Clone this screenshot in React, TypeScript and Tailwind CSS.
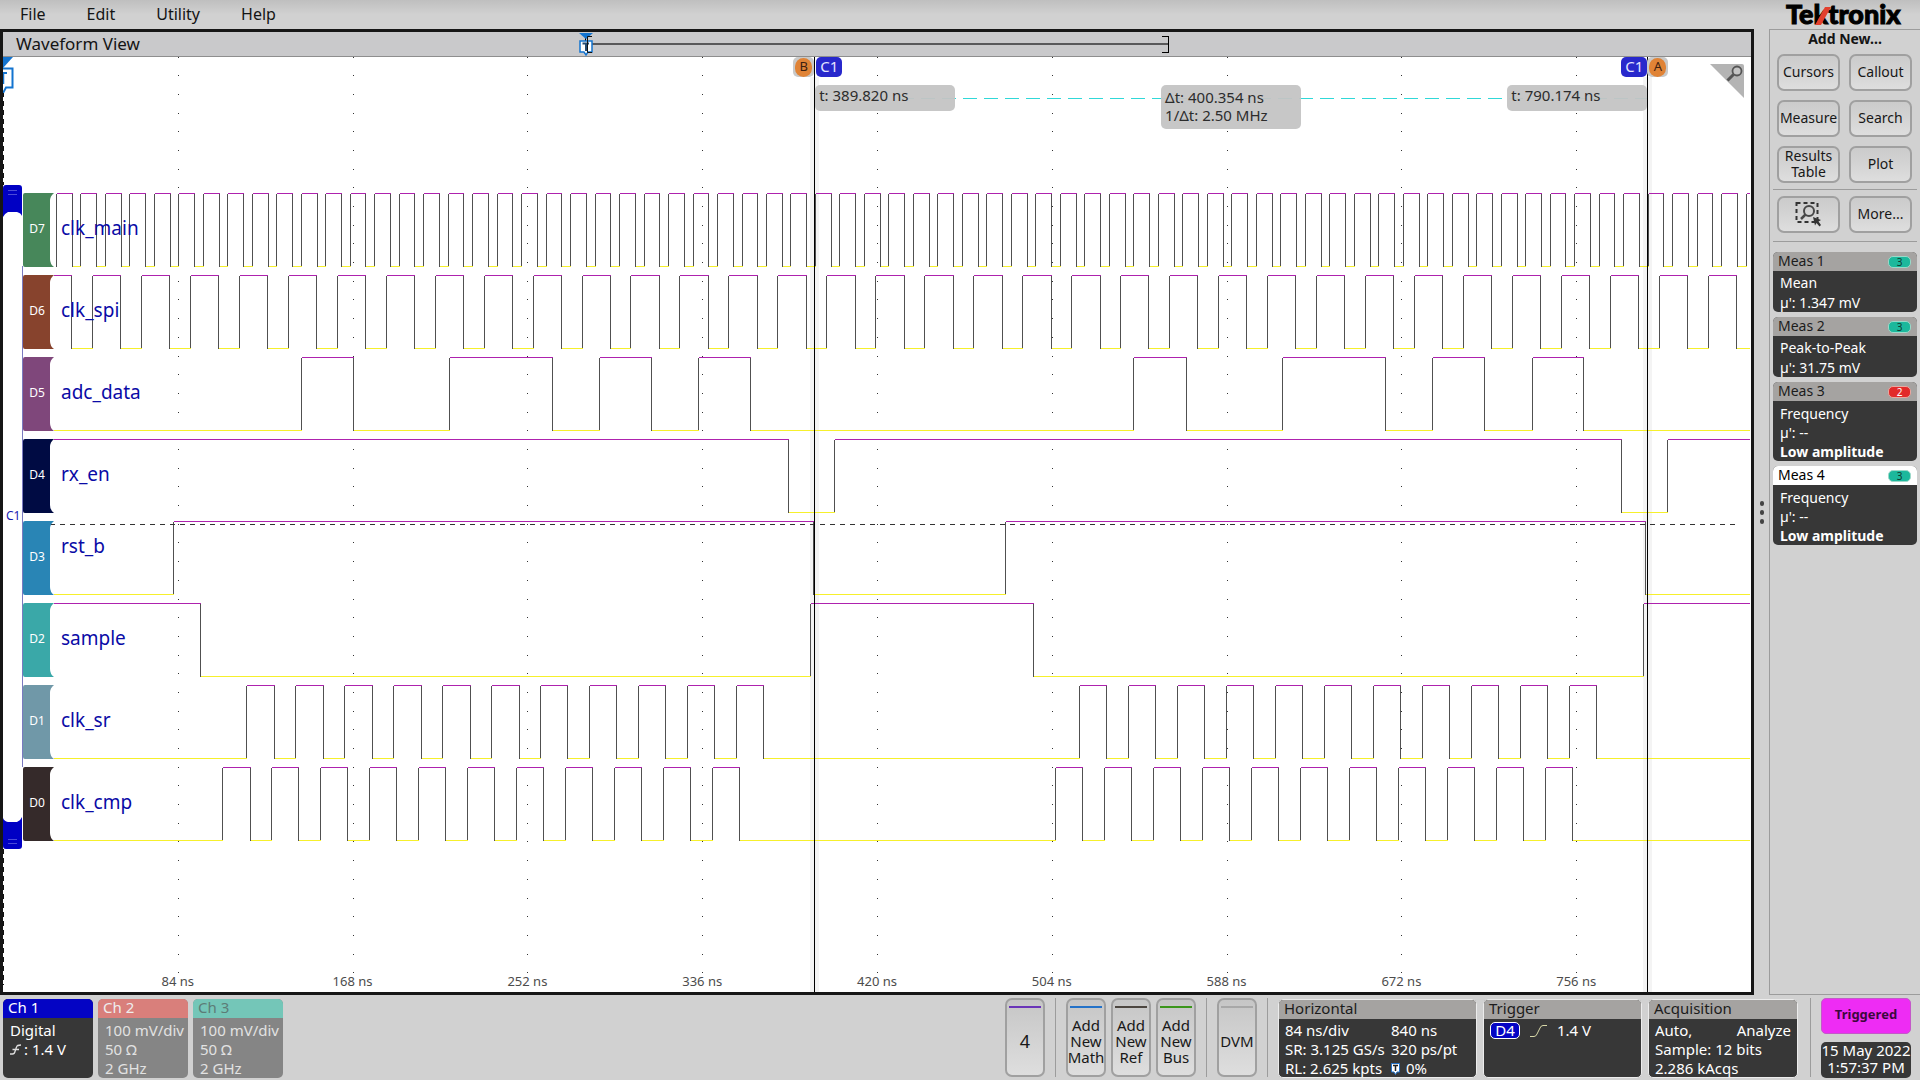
import React from "react";

const VIEW_W = 1748;
const VIEW_H = 935;
const SPAN_NS = 840;
const ROW_PITCH = 82;
const FIRST_HIGH = 136;
const SWING = 73;

const percent = (ns: number) => `${(ns / SPAN_NS) * 100}%`;

// A train of pulses as [rise, fall] pairs.
function pulses(first: number, period: number, width: number, count: number): number[] {
  const out: number[] = [];
  for (let i = 0; i < count; i++) {
    out.push(first + period * i, first + period * i + width);
  }
  return out;
}

type Channel = {
  id: string;
  name: string;
  startHigh: boolean;
  edges: number[];
  color: string;
  lift?: boolean;
};

const channels: Channel[] = [
  { id: "D7", name: "clk_main", startHigh: false, edges: pulses(53.3, 24.49, 15.8, 70), color: "#47875a" },
  { id: "D6", name: "clk_spi", startHigh: true, edges: [68.4, ...pulses(89.2, 48.98, 28.2, 34)], color: "#87432d" },
  { id: "D5", name: "adc_data", startHigh: false, edges: [298, 350, 446, 549, 596, 648, 695, 747, 1130, 1183, 1279, 1382, 1429, 1481, 1529, 1580], color: "#7f477b" },
  { id: "D4", name: "rx_en", startHigh: true, edges: [785, 831, 1618, 1664], color: "#000b43" },
  { id: "D3", name: "rst_b", startHigh: false, edges: [170, 810, 1002, 1642], color: "#2985b5", lift: true },
  { id: "D2", name: "sample", startHigh: true, edges: [197, 807, 1030, 1640], color: "#3aa8a8" },
  { id: "D1", name: "clk_sr", startHigh: false, edges: [...pulses(243.5, 48.98, 27.6, 11), ...pulses(1076.5, 48.98, 27.4, 11)], color: "#7098a8" },
  { id: "D0", name: "clk_cmp", startHigh: false, edges: [...pulses(219.4, 48.98, 27.6, 11), ...pulses(1052.5, 48.98, 27.4, 11)], color: "#352a2a" },
];

function Trace({ channel, row }: { channel: Channel; row: number }) {
  const top = FIRST_HIGH + ROW_PITCH * row + 0.5;
  const bottom = top + SWING;
  let high = channel.startHigh;
  let x = channel.id === "D7" ? 53.5 : 50.5;
  let highs = "";
  let lows = "";
  let sides = "";
  for (const raw of [...channel.edges, VIEW_W - 1]) {
    const next = Math.min(Math.floor(raw), VIEW_W - 2) + 0.5;
    if (next > x) {
      if (high) highs += `M${x} ${top}H${next}`;
      else lows += `M${x} ${bottom}H${next}`;
    }
    if (raw < VIEW_W - 1) sides += `M${next} ${top}V${bottom}`;
    x = next;
    high = !high;
    if (raw >= VIEW_W - 1) break;
  }
  return (
    <g fill="none" strokeWidth="1">
      <path d={sides} stroke="#505050" />
      <path d={highs} stroke="#ae22ae" />
      <path d={lows} stroke="#f6f02c" />
    </g>
  );
}

const gridTimes = [84, 168, 252, 336, 420, 504, 588, 672, 756];

function Graticule() {
  return (
    <svg
      className="absolute inset-0 h-full w-full"
      viewBox={`0 0 ${VIEW_W} ${VIEW_H}`}
      preserveAspectRatio="none"
      shapeRendering="crispEdges"
      aria-hidden="true"
    >
      <rect x="807" y="20" width="9" height="915" fill="#f4f4f4" />
      <rect x="1640" y="20" width="9" height="915" fill="#f4f4f4" />
      {gridTimes.map((t) => {
        const x = Math.round((t / SPAN_NS) * VIEW_W);
        return Array.from({ length: 50 }, (_, i) => (
          <rect key={`${t}-${i}`} x={x} y={Math.floor(i * 18.69)} width="1" height="1" fill="#333" />
        ));
      })}
      <path d="M0.5 35V128M0.5 792V928" stroke="#111" strokeWidth="1" strokeDasharray="5 4" />
      {channels.map((c, i) => (
        <Trace key={c.id} channel={c} row={i} />
      ))}
      <path d="M47 467.5H1734" stroke="#333" strokeWidth="1" strokeDasharray="5 5" />
      <path d="M897 41.5H1644" stroke="#30d8d8" strokeWidth="1" strokeDasharray="14 7" />
      <path d="M811.5 0V935M1644.5 0V935" stroke="#000" strokeWidth="1" />
      <path d="M19.5 209V710" stroke="#7a7ac0" strokeWidth="1" />
    </svg>
  );
}

function Handle({ flip }: { flip?: boolean }) {
  return (
    <svg className={flip ? "h-8 w-[19px] rotate-180" : "h-8 w-[19px]"} viewBox="0 0 19 32" aria-hidden="true">
      <path d="M0 3Q0 0 3 0H16Q19 0 19 3V31Q18 28 14 27H5Q1 29 0 32Z" fill="#0000c4" />
      <path d="M5 5.5H14M5 9.5H14" stroke="#4a4ad8" />
    </svg>
  );
}

function ChannelTag({ channel }: { channel: Channel }) {
  return (
    <div className="flex h-[74px] items-center">
      <div className="relative flex h-full w-[31px] items-center justify-center pb-0.5 pr-[3px] text-[12px] text-white">
        <svg className="absolute inset-0 h-full w-full" viewBox="0 0 31 74" aria-hidden="true">
          <path d="M2 0H31Q27 3 27 8V66Q27 71 31 74H2Q0 74 0 72V2Q0 0 2 0Z" fill={channel.color} />
        </svg>
        <span className="relative">{channel.id}</span>
      </div>
      <span className={channel.lift ? "pb-6 pl-[7px] text-[19px] leading-6 text-[#0a0aa6]" : "pb-1 pl-[7px] text-[19px] leading-6 text-[#0a0aa6]"}>
        {channel.name}
      </span>
    </div>
  );
}

function Readout({ children, className }: { children: React.ReactNode; className: string }) {
  return (
    <div className={`absolute top-7 w-[140px] rounded-[5px] bg-[#c4c4c4]/95 px-1 text-[15px] text-[#2c2c2c] ${className}`}>
      {children}
    </div>
  );
}

function CursorBadge({ letter }: { letter: string }) {
  return (
    <span className="flex h-5 w-[21px] items-center justify-center rounded-[5px] bg-[#c9c9c9]">
      <span className="flex h-[19px] w-[17px] items-center justify-center rounded-full bg-[#e08336] pb-px text-[13px] text-[#3c2010]">{letter}</span>
    </span>
  );
}

function SourceBadge() {
  return <span className="flex h-5 w-[26px] items-center justify-center rounded-[5px] bg-[#2828cc] pb-0.5 text-[15px] text-[#e4e4ff]">C1</span>;
}

function TriggerFlag() {
  return (
    <svg className="h-[25px] w-[16px]" viewBox="0 0 16 25" aria-hidden="true">
      <path d="M1 0H15L8 6Z" fill="#1374d0" />
      <path d="M2 8H14V19H10L8 22L6 19H2Z" fill="#fff" stroke="#1374d0" strokeWidth="1.5" />
      <path d="M4.5 10.5H11M8 10.5V18" stroke="#234a70" strokeWidth="2" />
      <path d="M14 3.5H9.5V19.500H14" fill="none" stroke="#111" />
    </svg>
  );
}

function WaveformView() {
  return (
    <section className="flex min-w-0 flex-1 flex-col border-[3px] border-[#161616] bg-white">
      <div className="relative flex h-[25px] items-center border-b border-[#8e8e8e] bg-[#c9c9cb] pl-[13px] text-[17px] text-[#141414]">
        <h1>Waveform View</h1>
        <div className="absolute inset-y-0 left-[33.3%] right-[33.3%] flex items-center">
          <span className="h-4 w-1.5 border-y border-l border-black" />
          <span className="h-0.5 flex-1 bg-[#58585a]" />
          <span className="-ml-1.5 h-[17px] w-[7px] border-y border-r border-black" />
        </div>
        <div className="absolute left-[33.3%] top-px -ml-[7px]">
          <TriggerFlag />
        </div>
      </div>
      <div className="relative min-h-[935px] flex-1 overflow-hidden">
        <Graticule />
        <svg className="absolute left-0 top-0 h-[36px] w-3" viewBox="0 0 12 36" aria-hidden="true">
          <path d="M0 0H10L0 11Z" fill="#1374d0" />
          <path d="M0 11.5H9.5V30.5H3L0 36" fill="#fff" stroke="#1374d0" strokeWidth="2" />
          <path d="M0 16H4" stroke="#1374d0" strokeWidth="2" />
          <path d="M0.5 16V27" stroke="#1374d0" strokeWidth="1.5" />
        </svg>
        <div className="absolute left-0 top-32 flex h-[664px] flex-col justify-between">
          <Handle />
          <span className="pb-0.5 pl-[3px] text-[12px] text-[#1a1ab0]">C1</span>
          <Handle flip />
        </div>
        <div className="absolute left-5 top-[136px] flex flex-col gap-2">
          {channels.map((c) => (
            <ChannelTag key={c.id} channel={c} />
          ))}
        </div>
        <div className="absolute inset-x-0 bottom-0 h-[22px] text-[13px] leading-[22px] text-[#4c4c4c]">
          {gridTimes.map((t) => (
            <span key={t} className="absolute -translate-x-1/2" style={{ left: percent(t) }}>
              {t} ns
            </span>
          ))}
        </div>
        <div className="absolute top-0" style={{ left: percent(389.82) }}>
          <div className="absolute right-0 top-0"><CursorBadge letter="B" /></div>
          <div className="absolute left-[2px] top-0"><SourceBadge /></div>
          <Readout className="left-px h-[26px] leading-[21px]">t: 389.820 ns</Readout>
        </div>
        <div className="absolute top-0" style={{ left: percent(556.5) }}>
          <Readout className="left-0 h-11 pt-[3px] leading-[18px]">
            Δt: 400.354 ns
            <br />
            1/Δt: 2.50 MHz
          </Readout>
        </div>
        <div className="absolute top-0" style={{ left: percent(790.174) }}>
          <div className="absolute right-0 top-0"><SourceBadge /></div>
          <div className="absolute left-0 top-0"><CursorBadge letter="A" /></div>
          <Readout className="right-0 h-[26px] leading-[21px]">t: 790.174 ns</Readout>
        </div>
        <button className="absolute right-[7px] top-[7px]" aria-label="Zoom">
          <svg className="h-[34px] w-[34px]" viewBox="0 0 34 34" aria-hidden="true">
            <path d="M0 0H32Q34 0 34 2V34Z" fill="#b4b4b4" />
            <circle cx="27" cy="7" r="4.500" fill="#c4c4c4" stroke="#555" strokeWidth="1.800" />
            <path d="M23.500 10.500L17.500 16.500" stroke="#555" strokeWidth="3" />
          </svg>
        </button>
      </div>
    </section>
  );
}

const panelButton =
  "flex h-[37px] items-center justify-center rounded-[7px] border-2 border-[#a0a0a0] bg-linear-to-b from-[#cbcbcb] via-[#d4d4d4] to-[#dedede] pb-0.5 text-[14px] leading-4 text-[#181818]";

type Measurement = { title: string; source: string; lines: string[]; warning?: string; red?: boolean; selected?: boolean };

const measurements: Measurement[] = [
  { title: "Meas 1", source: "3", lines: ["Mean", "µ': 1.347 mV"] },
  { title: "Meas 2", source: "3", lines: ["Peak-to-Peak", "µ': 31.75 mV"] },
  { title: "Meas 3", source: "2", lines: ["Frequency", "µ': --"], warning: "Low amplitude", red: true },
  { title: "Meas 4", source: "3", lines: ["Frequency", "µ': --"], warning: "Low amplitude", selected: true },
];

function MeasureCard({ m }: { m: Measurement }) {
  return (
    <article className="overflow-hidden rounded-[5px] bg-[#373737] text-white">
      <header className={`flex h-[19px] items-center justify-between pl-[5px] pr-1.5 text-[14px] ${m.selected ? "bg-white text-black" : "bg-[#a5a3a1] text-[#1c1c1c]"}`}>
        <h2 className="pb-0.5">{m.title}</h2>
        <span className={`flex h-[12px] w-[23px] items-center justify-center rounded-[5px] border text-[10px] leading-none ${m.red ? "border-[#e8a8a0] bg-[#e22a2a] text-white" : "border-[#9cd8c8] bg-[#1cb89c] text-[#103830]"}`}>
          {m.source}
        </span>
      </header>
      <div className={m.warning ? "h-[60px] pl-[7px] pt-[3px] text-[14px] leading-[19px]" : "h-[41px] pl-[7px] pt-0.5 text-[14px] leading-5"}>
        {m.lines.map((l) => (
          <p key={l}>{l}</p>
        ))}
        {m.warning && <p className="font-bold">{m.warning}</p>}
      </div>
    </article>
  );
}

function SidePanel() {
  return (
    <aside className="w-[151px] shrink-0 border-y border-l border-[#9c9c9c] px-[3px]">
      <h2 className="h-6 text-center text-[14px] font-bold leading-[17px] text-[#141414]">Add New...</h2>
      <div className="grid grid-cols-2 gap-[9px] pl-1 pr-[5px]">
        <button className={panelButton}>Cursors</button>
        <button className={panelButton}>Callout</button>
        <button className={panelButton}>Measure</button>
        <button className={panelButton}>Search</button>
        <button className={panelButton}>Results<br />Table</button>
        <button className={panelButton}>Plot</button>
      </div>
      <div className="mt-1.5 grid grid-cols-2 gap-[9px] border-y border-[#9c9c9c] pb-2 pl-1 pr-[5px] pt-1.5">
        <button className={panelButton} aria-label="Zoom to area">
          <svg className="h-[26px] w-[27px]" viewBox="0 0 27 26" aria-hidden="true">
            <rect x="1.500" y="2" width="21" height="19" fill="none" stroke="#333" strokeWidth="2" strokeDasharray="4 3" />
            <circle cx="14" cy="10" r="5" fill="none" stroke="#484848" strokeWidth="2" />
            <path d="M10.500 13.500L6 18" stroke="#484848" strokeWidth="2.500" />
            <path d="M18 16L26 19L23.500 20.500L26 24L24.500 25.500L21.500 22L20 24.500Z" fill="#333" />
          </svg>
        </button>
        <button className={panelButton}>More...</button>
      </div>
      <div className="flex flex-col gap-[5px] pt-2.5">
        {measurements.map((m) => (
          <MeasureCard key={m.title} m={m} />
        ))}
      </div>
    </aside>
  );
}

function Logo() {
  return (
    <div className="relative w-[134px] pb-0.5 text-[27px] font-black leading-[28px] text-black [-webkit-text-stroke:1px_black]" style={{ fontFamily: "Lato, sans-serif" }}>
      Tektronix
      <svg className="absolute left-[29px] top-[7px] h-[18px] w-4" viewBox="0 0 16 18" aria-hidden="true">
        <path d="M0 18L10 0H16L6 18Z" fill="#e2402e" />
      </svg>
    </div>
  );
}

function ChannelBadge({ name, header, body, children }: { name: string; header: string; body: string; children: React.ReactNode }) {
  return (
    <article className={`w-[90px] overflow-hidden rounded-[5px] text-[15px] ${body}`}>
      <h2 className={`h-[19px] pl-[5px] leading-4 ${header}`}>{name}</h2>
      <div className="h-[60px] pl-[7px] pt-[3px] leading-[19px]">{children}</div>
    </article>
  );
}

function TallButton({ bar, big, children }: { bar: string; big?: boolean; children: React.ReactNode }) {
  return (
    <button className="flex h-[79px] w-10 flex-col items-center rounded-[7px] border-2 border-[#a0a0a0] bg-linear-to-b from-[#c6c6c6] via-[#d2d2d2] to-[#dedede] pt-1.5 text-[#181818]">
      <span className={`h-0.5 w-8 ${bar}`} />
      <span className={`flex flex-1 items-center pb-px leading-4 ${big ? "text-[18px]" : "text-[15px]"}`}>
        <span>{children}</span>
      </span>
    </button>
  );
}

function Rule() {
  return <span className="h-[79px] w-px bg-[#9c9c9c]" />;
}

function InfoBox({ title, width, children }: { title: string; width: string; children: React.ReactNode }) {
  return (
    <article className={`mt-px overflow-hidden rounded-[5px] border border-[#ececec] bg-[#373737] text-[15px] text-white ${width}`}>
      <h2 className="h-[19px] bg-[#a5a3a1] pl-[5px] leading-4 text-[#1c1c1c]">{title}</h2>
      <div className="h-[58px] px-1.5 pt-0.5 leading-[19px]">{children}</div>
    </article>
  );
}

function SettingsBar() {
  return (
    <footer className="flex h-[85px] items-start justify-between pl-[3px] pr-[9px] pt-[3px]">
      <div className="flex gap-[5px] pt-px">
        <ChannelBadge name="Ch 1" header="bg-[#0404c4] text-white" body="bg-[#373737] text-white">
          <p>Digital</p>
          <p className="flex items-center gap-0.5">
            <svg className="h-3.5 w-3" viewBox="0 0 12 14" aria-hidden="true">
              <path d="M0 11H2.500Q4.500 11 5 8.500L6.500 4Q7 2 11 2M2.500 6.500H9" fill="none" stroke="#ddd" strokeWidth="1.300" />
            </svg>
            : 1.4 V
          </p>
        </ChannelBadge>
        <ChannelBadge name="Ch 2" header="bg-[#d97f7b] text-[#eee]" body="bg-[#858585] text-[#e2e2e2]">
          <p>100 mV/div</p>
          <p>50 Ω</p>
          <p>2 GHz</p>
        </ChannelBadge>
        <ChannelBadge name="Ch 3" header="bg-[#74c6b8] text-[#5c7c76]" body="bg-[#858585] text-[#e2e2e2]">
          <p>100 mV/div</p>
          <p>50 Ω</p>
          <p>2 GHz</p>
        </ChannelBadge>
      </div>
      <div className="flex items-start gap-2.5">
        <TallButton bar="bg-[#6a35b8]" big>4</TallButton>
        <Rule />
        <div className="flex gap-[5px]">
          <TallButton bar="bg-[#2472c8]">Add New Math</TallButton>
          <TallButton bar="bg-[#4c4640]">Add New Ref</TallButton>
          <TallButton bar="bg-[#3c961c]">Add New Bus</TallButton>
        </div>
        <Rule />
        <TallButton bar="bg-[#a8a8a8]">DVM</TallButton>
        <Rule />
        <div className="flex gap-1.5">
          <InfoBox title="Horizontal" width="w-[199px]">
            <div className="grid grid-cols-[106px_1fr] whitespace-nowrap">
              <span>84 ns/div</span>
              <span>840 ns</span>
              <span>SR: 3.125 GS/s</span>
              <span>320 ps/pt</span>
              <span>RL: 2.625 kpts</span>
              <span className="flex items-center gap-1.5">
                <svg className="h-3 w-[9px]" viewBox="0 0 9 12" aria-hidden="true">
                  <path d="M0.500 0.500H8.500V9H6L4.500 11.500L3 9H0.500Z" fill="#fff" stroke="#2472c8" />
                  <path d="M2 2.500H7M4.500 2.500V8" stroke="#222" strokeWidth="1.500" />
                </svg>
                0%
              </span>
            </div>
          </InfoBox>
          <InfoBox title="Trigger" width="w-[159px]">
            <p className="flex items-center gap-2.5">
              <span className="flex h-[17px] w-[30px] items-center justify-center rounded-[5px] border border-white bg-[#0404c4]">D4</span>
              <svg className="h-3 w-[17px]" viewBox="0 0 17 12" aria-hidden="true">
                <path d="M0 11.500H4Q6 11.500 7 9L10 3Q11 0.500 13 0.500H17" fill="none" stroke="#d8d8a8" />
              </svg>
              1.4 V
            </p>
          </InfoBox>
          <InfoBox title="Acquisition" width="w-[150px]">
            <p className="flex justify-between"><span>Auto,</span><span>Analyze</span></p>
            <p>Sample: 12 bits</p>
            <p>2.286 kAcqs</p>
          </InfoBox>
        </div>
        <div className="pl-0.5"><div className="h-[79px] w-px bg-[#9c9c9c]" /></div>
        <div className="flex w-[90px] flex-col gap-2">
          <button className="h-9 rounded-[5px] border border-[#c458c8] bg-[#ee2cf4] pb-0.5 text-[13px] font-bold text-[#3c083c]">Triggered</button>
          <time className="h-9 whitespace-nowrap rounded-[5px] bg-[#373737] text-center text-[15px] leading-[17px] text-white">
            15 May 2022
            <br />
            1:57:37 PM
          </time>
        </div>
      </div>
    </footer>
  );
}

export default function App() {
  return (
    <div className="flex min-h-screen flex-col bg-[#d1d1d1]" style={{ fontFamily: '"Noto Sans", sans-serif' }}>
      <header className="flex h-[29px] items-center justify-between bg-linear-to-b from-[#bfbfbf] to-[#d1d1d1] to-50%">
        <nav className="flex gap-[41px] pb-0.5 pl-5 text-[16px] leading-6 text-[#141414]">
          <button>File</button>
          <button>Edit</button>
          <button>Utility</button>
          <button>Help</button>
        </nav>
        <Logo />
      </header>
      <main className="flex flex-1">
        <WaveformView />
        <div className="flex w-[15px] flex-col items-center justify-center gap-1">
          <span className="h-[5px] w-1 rounded-full bg-[#444]" />
          <span className="h-[5px] w-1 rounded-full bg-[#444]" />
          <span className="h-[5px] w-1 rounded-full bg-[#444]" />
        </div>
        <SidePanel />
      </main>
      <SettingsBar />
    </div>
  );
}
